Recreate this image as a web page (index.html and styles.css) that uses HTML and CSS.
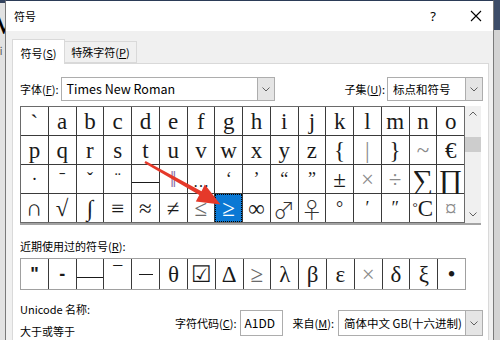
FILE: index.html
```html
<!DOCTYPE html>
<html>
<head>
<meta charset="utf-8">
<title>符号</title>
<link rel="stylesheet" href="styles.css">
</head>
<body>
<div class="bg-left"><span class="bg-w">W</span><span class="bg-x">Xi</span></div>
<div class="bg-right"></div>
<div class="dialog">
  <div class="titlebar">
    <span class="title">符号</span>
    <span class="tb-btn help">?</span>
    <span class="tb-btn close"><svg width="12" height="12" viewBox="0 0 12 12"><path d="M1 1L11 11M11 1L1 11" stroke="#000" stroke-width="1.1" fill="none"/></svg></span>
  </div>
  <div class="body">
    <div class="tabs">
      <div class="tab tab-active">符号(<u>S</u>)</div>
      <div class="tab">特殊字符(<u>P</u>)</div>
    </div>
    <div class="panel">
      <div class="row-font">
        <span class="lbl">字体(<u>F</u>):</span>
        <div class="combo combo-font">
          <span class="combo-text latin">Times New Roman</span>
          <span class="combo-btn"><svg width="8" height="5" viewBox="0 0 8 5"><path d="M0.5 0.5L4 4L7.5 0.5" stroke="#606060" fill="none"/></svg></span>
        </div>
        <div class="subset">
          <span class="lbl">子集(<u>U</u>):</span>
          <div class="combo combo-subset">
            <span class="combo-text">标点和符号</span>
            <span class="combo-btn"><svg width="8" height="5" viewBox="0 0 8 5"><path d="M0.5 0.5L4 4L7.5 0.5" stroke="#606060" fill="none"/></svg></span>
          </div>
        </div>
      </div>

      <div class="charmap">
        <div class="cells">
          <div class="cell top">`</div><div class="cell">a</div><div class="cell">b</div><div class="cell">c</div><div class="cell">d</div><div class="cell">e</div><div class="cell">f</div><div class="cell">g</div><div class="cell">h</div><div class="cell">i</div><div class="cell">j</div><div class="cell">k</div><div class="cell">l</div><div class="cell">m</div><div class="cell">n</div><div class="cell">o</div>
          <div class="cell">p</div><div class="cell">q</div><div class="cell">r</div><div class="cell">s</div><div class="cell">t</div><div class="cell">u</div><div class="cell">v</div><div class="cell">w</div><div class="cell">x</div><div class="cell">y</div><div class="cell">z</div><div class="cell">{</div><div class="cell lt">|</div><div class="cell">}</div><div class="cell lt">~</div><div class="cell">€</div>
          <div class="cell sm">·</div><div class="cell sm top">ˉ</div><div class="cell sm top">ˇ</div><div class="cell sm top">¨</div><div class="cell low"><span class="dash"></span></div><div class="cell purple">‖</div><div class="cell low2">…</div><div class="cell sm top">‘</div><div class="cell sm top">’</div><div class="cell sm top">“</div><div class="cell sm top">”</div><div class="cell">±</div><div class="cell lt">×</div><div class="cell lt">÷</div><div class="cell big">∑</div><div class="cell big">∏</div>
          <div class="cell">∩</div><div class="cell">√</div><div class="cell">∫</div><div class="cell">≡</div><div class="cell">≈</div><div class="cell">≠</div><div class="cell lt2">≤</div><div class="cell sel">≥</div><div class="cell">∞</div><div class="cell sym">♂</div><div class="cell sym">♀</div><div class="cell sm top">°</div><div class="cell sm">′</div><div class="cell sm">″</div><div class="cell"><span class="deg">°</span>C</div><div class="cell lt">¤</div>
        </div>
        <div class="scroll">
          <svg class="sc-up" width="8" height="5" viewBox="0 0 8 5"><path d="M0.5 4.5L4 1L7.5 4.5" stroke="#606060" fill="none"/></svg>
          <div class="thumb"></div>
          <div class="spacer"></div>
          <svg class="sc-down" width="8" height="5" viewBox="0 0 8 5"><path d="M0.5 0.5L4 4L7.5 0.5" stroke="#606060" fill="none"/></svg>
        </div>
      </div>

      <div class="recent-label">近期使用过的符号(<u>R</u>):</div>
      <div class="recent">
        <div class="cell bold">"</div><div class="cell bold">-</div><div class="cell"><span class="dash mid"></span></div><div class="cell sm top">¯</div><div class="cell"><span class="endash"></span></div><div class="cell">θ</div><div class="cell">☑</div><div class="cell">Δ</div><div class="cell lt2">≥</div><div class="cell">λ</div><div class="cell">β</div><div class="cell">ε</div><div class="cell lt">×</div><div class="cell">δ</div><div class="cell">ξ</div><div class="cell">•</div>
      </div>

      <div class="info">
        <div class="names">
          <div class="line">Unicode 名称:</div>
          <div class="line">大于或等于</div>
        </div>
        <div class="code-group">
          <span class="lbl">字符代码(<u>C</u>):</span>
          <div class="input">A1DD</div>
          <span class="lbl from">来自(<u>M</u>):</span>
          <div class="combo combo-from">
            <span class="combo-text">简体中文 GB(十六进制)</span>
            <span class="combo-btn"><svg width="8" height="5" viewBox="0 0 8 5"><path d="M0.5 0.5L4 4L7.5 0.5" stroke="#606060" fill="none"/></svg></span>
          </div>
        </div>
      </div>
    </div>
  </div>
</div>
<svg class="arrow" width="500" height="340" viewBox="0 0 500 340">
  <polygon points="145.6,161.0 201.5,191.2 204.8,184.6 220.5,204.5 195.8,201.6 199.3,195.0 144.4,163.0" fill="#e5392a"/>
</svg>
</body>
</html>
```

FILE: styles.css
```css
* { box-sizing: border-box; }

body {
  margin: 0;
  width: 500px;
  height: 340px;
  overflow: hidden;
  position: relative;
  background: #d8d8d8;
  font-family: "Noto Sans CJK SC", "Microsoft YaHei", sans-serif;
  font-size: 11px;
  color: #000;
}

u { text-decoration: underline; text-underline-offset: 1px; }

.bg-left {
  position: absolute;
  left: 0;
  top: 0;
  width: 5px;
  height: 340px;
  background: #e2e2e2;
  border-top: 3px solid #34445f;
  overflow: hidden;
}
.bg-w {
  position: absolute;
  left: -16px;
  top: 6px;
  font-family: "Liberation Serif", serif;
  font-size: 30px;
  line-height: 1;
}
.bg-x {
  position: absolute;
  left: -6px;
  top: 40px;
  font-size: 10px;
  color: #555;
}

.bg-right {
  position: absolute;
  right: 0;
  top: 0;
  width: 8px;
  height: 340px;
  background: linear-gradient(#3c4c68 0, #3c4c68 30px, #d3d3d3 30px);
}

.dialog {
  position: absolute;
  left: 5px;
  top: 0;
  width: 489px;
  height: 360px;
  background: #f0f0f0;
  border: 1px solid #7a7a7a;
  border-top: 1px solid #2b3b57;
}

.titlebar {
  height: 30px;
  background: #fff;
  display: flex;
  align-items: center;
  padding-left: 8px;
  font-size: 11px;
}
.title { flex: 1; }
.tb-btn {
  width: 34px;
  height: 30px;
  display: flex;
  align-items: center;
  justify-content: center;
}
.help { margin-right: 9px; font-size: 13px; font-family: "Noto Sans", sans-serif; }

.body { padding: 8px 0 0 6px; }

.tabs {
  display: flex;
  align-items: flex-start;
  height: 25px;
  margin-bottom: -1px;
  position: relative;
  z-index: 1;
}
.tab {
  width: 72px;
  height: 22px;
  margin-top: 2px;
  border: 1px solid #d9d9d9;
  border-left: none;
  background: #f0f0f0;
  display: flex;
  align-items: center;
  justify-content: center;
  line-height: 16px;
}
.tab-active {
  width: 53px;
  height: 25px;
  margin-top: 0;
  border: 1px solid #d9d9d9;
  border-bottom: none;
  background: #fff;
  padding-top: 1px;
}

.panel {
  width: 477px;
  height: 300px;
  background: #fff;
  border: 1px solid #d9d9d9;
  padding: 13px 5px 0 7px;
}

.row-font {
  display: flex;
  align-items: center;
  height: 24px;
}
.lbl { line-height: 16px; white-space: nowrap; }

.combo {
  display: flex;
  height: 24px;
  border: 1px solid #adadad;
  background: #fff;
}
.combo-text {
  flex: 1;
  padding-left: 5px;
  line-height: 22px;
  font-size: 11.5px;
  white-space: nowrap;
  overflow: hidden;
}
.combo-text.latin { font-size: 12.5px; }
.combo-btn {
  width: 17px;
  background: #e5e5e5;
  border-left: 1px solid #adadad;
  display: flex;
  align-items: center;
  justify-content: center;
}
.combo-font { width: 214px; margin-left: 2px; }
.subset { margin-left: auto; display: flex; align-items: center; }
.combo-subset { width: 96px; margin-left: 2px; }

.charmap {
  margin-top: 5px;
  display: flex;
  width: 461px;
  border-bottom: 2px solid #a3a3a3;
}
.cells {
  display: grid;
  grid-template-columns: repeat(16, 1fr);
  grid-auto-rows: 28px;
  gap: 1px;
  width: 445px;
  background: #3a3a3a;
  border: 1px solid #6a6a6a;
}
.cell {
  background: #fff;
  display: flex;
  align-items: center;
  justify-content: center;
  font-family: "Liberation Serif", "DejaVu Serif", serif;
  font-size: 23px;
  line-height: 1;
  color: #1a1a1a;
}
.cell.top { align-items: flex-start; padding-top: 5px; }
.cell.sm { font-size: 18px; }
.cell.big { font-size: 29px; line-height: 28px; padding-top: 1px; }
.cell.lt { color: #8a8a8a; }
.cell.lt2 { color: #6a6a6a; }
.cell.sym { font-family: "Noto Sans CJK SC", sans-serif; font-size: 22px; font-weight: 300; color: #333; }
.cell.purple { color: #8a6aa6; }
.cell.low { align-items: flex-end; padding-bottom: 10px; }
.cell.low2 { align-items: flex-end; padding-bottom: 3px; font-size: 16px; }
.cell.sel {
  background: #0a78d4;
  color: #fff;
  outline: 1px dotted #000;
  outline-offset: -1px;
}
.cell.bold { font-weight: bold; font-family: "Liberation Sans", sans-serif; font-size: 18px; }
.deg { font-size: 13px; align-self: flex-start; margin-top: 6px; }

.dash {
  display: block;
  width: 100%;
  height: 1px;
  background: #1a1a1a;
}
.dash.mid { margin-top: 6px; }
.endash {
  display: block;
  width: 14px;
  height: 1px;
  background: #1a1a1a;
}

.scroll {
  width: 16px;
  height: 117px;
  background: #f0f0f0;
  display: flex;
  flex-direction: column;
  align-items: center;
  padding-top: 5px;
  padding-bottom: 6px;
}
.thumb {
  width: 16px;
  height: 15px;
  margin-top: 21px;
  background: #cdcdcd;
}
.spacer { flex: 1; }

.recent-label {
  margin-top: 13px;
  line-height: 16px;
}
.recent {
  margin-top: 4px;
  display: grid;
  grid-template-columns: repeat(16, 1fr);
  grid-template-rows: 30px;
  gap: 1px;
  width: 446px;
  height: 32px;
  background: #3a3a3a;
  border: 1px solid #a0a0a0;
}

.info {
  display: flex;
  margin-top: 8px;
}
.names { width: 155px; }
.line { line-height: 22px; white-space: nowrap; }
.code-group {
  flex: 1;
  display: flex;
  align-items: center;
  height: 26px;
  margin-top: 12px;
}
.input {
  width: 43px;
  height: 26px;
  margin-left: 3px;
  border: 1px solid #adadad;
  background: #fff;
  padding-left: 4px;
  line-height: 24px;
  font-size: 12px;
}
.from { margin-left: 10px; }
.combo-from { width: 145px; height: 26px; margin-left: auto; }
.combo-from .combo-text { line-height: 24px; }

.arrow {
  position: absolute;
  left: 0;
  top: 0;
  pointer-events: none;
  z-index: 10;
}
```
